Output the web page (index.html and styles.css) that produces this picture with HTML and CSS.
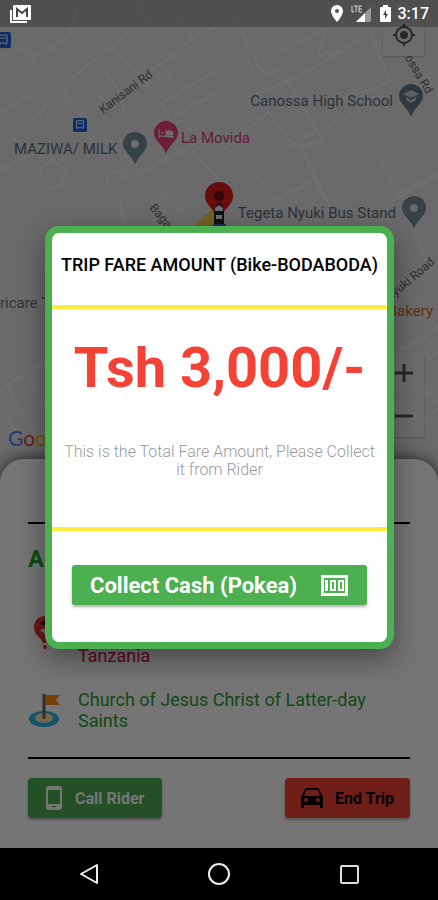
FILE: index.html
```html
<!DOCTYPE html>
<html lang="en">
<head>
  <meta charset="UTF-8" />
  <meta name="viewport" content="width=device-width, initial-scale=1" />
  <title>Trip Fare</title>
  <link rel="stylesheet" href="styles.css">
</head>
<body>

  <div class="app">
    <header class="status-bar">
      <svg class="mail-icon" width="22" height="18" viewBox="0 0 22 18">
        <path d="M1 5v12h16" fill="none" stroke="#fff" stroke-width="2"/>
        <path d="M4 0h16a1 1 0 0 1 1 1v13a1 1 0 0 1-1 1H4a1 1 0 0 1-1-1V1a1 1 0 0 1 1-1z" fill="#fff"/>
        <path d="M7 12V4l5 4 5-4v8" fill="none" stroke="#444" stroke-width="2"/>
      </svg>
      <div class="status-right">
        <svg width="12" height="17" viewBox="0 0 12 17">
          <path d="M6 0a6 6 0 0 0-6 6c0 4.500 6 11 6 11s6-6.500 6-11a6 6 0 0 0-6-6z" fill="#fff"/>
          <circle cx="6" cy="6" r="2" fill="#555"/>
        </svg>
        <svg class="signal-icon" width="22" height="18" viewBox="0 0 22 18">
          <path d="M21 2v15H6z" fill="#999"/>
          <path d="M15 8v9H6z" fill="#fff"/>
          <path d="M2 1v6h2M4 1h4M6 1v6M12 1H9v6h3M9 4h3" fill="none" stroke="#ddd" stroke-width="1"/>
        </svg>
        <svg class="battery-icon" width="11" height="17" viewBox="0 0 11 17">
          <path d="M3 0h5v2h2a1 1 0 0 1 1 1v13a1 1 0 0 1-1 1H1a1 1 0 0 1-1-1V3a1 1 0 0 1 1-1h2z" fill="#fff"/>
          <path d="M6 5L3 10h2v4l3-5H6z" fill="#444"/>
        </svg>
        <span class="clock">3:17</span>
      </div>
    </header>

    <main class="screen">
      <section class="map">
        <svg class="roads" viewBox="0 0 438 500" preserveAspectRatio="xMidYMin slice">
          <g class="minor">
            <path d="M77 8L69 34Q54 50 36 54L20 50"/>
            <path d="M127 34L66 83Q61 89 67 94L84 116M114 49L142 77L170 118M102 68L118 90L125 116"/>
            <path d="M0 112L36 92M48 102L38 116"/>
            <path d="M136 0L170 56L192 38L219 24M172 56L140 78M180 13L192 38M163 65L175 85"/>
            <path d="M219 69L164 102M219 91L173 116"/>
            <path d="M231 10L260 70L288 82L360 40M240 50L254 70M276 52L326 30L318 56L340 50"/>
            <path d="M262 62L270 73L277 70M242 98L288 82L324 142L292 146M369 30L390 82L340 100"/>
            <path d="M268 112L292 144L360 110M300 146L330 206M219 154L268 112M242 150L274 200L312 181M300 144L326 202"/>
            <path d="M378 154L398 194L438 174M420 152L438 144M390 202L438 176M416 58L438 92"/>
            <path d="M140 172L219 132M192 150L219 180M160 196L175 187M0 170L36 152M36 110L42 118"/>
            <path d="M52 160Q34 170 43 182Q52 192 61 184L66 170L50 158"/>
            <path d="M124 222L120 198L108 184Q102 170 116 172L128 178"/>
            <path d="M0 390L28 372L44 362M8 388L34 434M0 410L16 430M28 374L42 404"/>
            <path d="M411 220L426 262L438 270M380 300L404 284L438 330M394 352L426 338L438 350M428 360L438 352M426 420L438 408M424 390L438 402"/>
          </g>
          <path class="major-edge" d="M4 48L24 58L80 120L150 190L202 238"/>
          <path class="major" d="M4 48L24 58L80 120L150 190L202 238"/>
          <path class="major-line" d="M4 48L24 58L80 120L150 190L202 238"/>
          <g class="road-names">
            <text x="103" y="114" transform="rotate(-37 103 114)">Kanisani Rd</text>
            <text x="149" y="208" transform="rotate(50 149 208)">Bagamoyo</text>
            <text x="401" y="52" transform="rotate(59 401 52)">nossa Rd</text>
            <text x="389" y="302" transform="rotate(-40 389 302)">Nyuki Road</text>
          </g>
        </svg>

        <div class="transit transit-edge"><svg width="16" height="16" viewBox="0 0 16 16"><rect width="16" height="16" rx="2" fill="#1d62dc"/><path d="M4 3h8v8H4zM5 6h6M5 11v2M11 11v2" fill="none" stroke="#fff" stroke-width="1"/></svg></div>
        <div class="transit transit-mid"><svg width="14" height="14" viewBox="0 0 16 16"><rect width="16" height="16" rx="2" fill="#1d62dc"/><path d="M4 3h8v8H4zM5 6h6M5 11v2M11 11v2" fill="none" stroke="#fff" stroke-width="1"/></svg></div>

        <div class="place place-school">
          <span>Canossa High School</span>
          <svg width="24" height="33" viewBox="0 0 24 33"><path d="M12 0A12 12 0 0 0 0 12c0 8 9 11 12 21 3-10 12-13 12-21A12 12 0 0 0 12 0z" fill="#607d8b"/><path d="M4 10l8-4 8 4-8 4zM7 13v3l5 3 5-3v-3l-5 3z" fill="#ccc"/></svg>
        </div>
        <div class="place place-milk">
          <span>MAZIWA/ MILK</span>
          <svg width="24" height="33" viewBox="0 0 24 33"><path d="M12 0A12 12 0 0 0 0 12c0 8 9 11 12 21 3-10 12-13 12-21A12 12 0 0 0 12 0z" fill="#78909c"/><circle cx="12" cy="12" r="4" fill="#eee"/></svg>
        </div>
        <div class="place place-hotel">
          <svg width="24" height="33" viewBox="0 0 24 33"><path d="M12 0A12 12 0 0 0 0 12c0 8 9 11 12 21 3-10 12-13 12-21A12 12 0 0 0 12 0z" fill="#ec407a"/><path d="M5 8v9M5 15h14v2M7 12h3M12 10h5q2 0 2 2v2h-7z" fill="#eee" stroke="#eee" stroke-width="1"/></svg>
          <span>La Movida</span>
        </div>
        <div class="place place-bus">
          <span>Tegeta Nyuki Bus Stand</span>
          <svg width="24" height="33" viewBox="0 0 24 33"><path d="M12 0A12 12 0 0 0 0 12c0 8 9 11 12 21 3-10 12-13 12-21A12 12 0 0 0 12 0z" fill="#78909c"/><circle cx="12" cy="12" r="4" fill="#dde"/></svg>
        </div>
        <div class="place place-care"><span>ricare T</span></div>
        <div class="place place-bakery"><span>Bakery</span></div>

        <svg class="driver" width="48" height="60" viewBox="0 0 48 60">
          <path d="M0 52L26 27L32 32V60H0z" fill="#f6d64a"/>
          <path d="M33 0A14 14 0 0 0 19 14c0 10 11 13 14 26 3-13 14-16 14-26A14 14 0 0 0 33 0z" fill="#e31b1b"/>
          <circle cx="33" cy="14" r="5" fill="#701010"/>
          <path d="M28 27l5-7 5 7v17H28z" fill="#222"/>
          <path d="M29 26l4-3 4 3v3h-8zM30 33h6v4h-6z" fill="#eee"/>
          <path d="M27 42h13v4H27z" fill="#4263eb"/>
        </svg>

        <button class="map-button locate" type="button" aria-label="My location">
          <svg width="24" height="24" viewBox="0 0 24 24"><circle cx="12" cy="12" r="8" fill="none" stroke="#555" stroke-width="2"/><circle cx="12" cy="12" r="4" fill="#555"/><path d="M12 1v3M12 20v3M1 12h3M20 12h3" stroke="#555" stroke-width="2"/></svg>
        </button>
        <div class="zoom-controls">
          <button class="map-button" type="button" aria-label="Zoom in">
            <svg width="20" height="20" viewBox="0 0 20 20"><path d="M1 10h18M10 1v18" stroke="#555" stroke-width="3"/></svg>
          </button>
          <button class="map-button" type="button" aria-label="Zoom out">
            <svg width="20" height="20" viewBox="0 0 20 20"><path d="M1 10h18" stroke="#555" stroke-width="3"/></svg>
          </button>
        </div>
        <div class="google"><span class="g-blue">G</span><span class="g-red">o</span><span class="g-yellow">o</span></div>
      </section>

      <section class="sheet">
        <hr>
        <h2 class="trip-status">A</h2>
        <div class="stop pickup">
          <svg class="stop-icon" width="32" height="34" viewBox="0 0 32 34"><path d="M17 0A11 11 0 0 0 6 12c0 7 7 9 9 15h3c2-6 10-8 10-15A11 11 0 0 0 17 0z" fill="#e53935"/><path d="M17 4a8 8 0 0 0-5 4l5 1z" fill="#222"/><path d="M12 14q5-3 8 0l-2 5z" fill="#eee"/><circle cx="17" cy="31" r="2" fill="#e53935"/></svg>
          <p>Tanzania</p>
        </div>
        <div class="stop dropoff">
          <svg class="stop-icon" width="32" height="34" viewBox="0 0 32 34"><ellipse cx="16" cy="26" rx="15" ry="8" fill="#29b6e8"/><ellipse cx="16" cy="25" rx="9" ry="5" fill="#ffe0a0"/><path d="M9 25a7 4 0 0 0 14 0" fill="none" stroke="#b5e4f4" stroke-width="1"/><path d="M16 1v25" stroke="#666" stroke-width="3"/><path d="M17 2h15l-4 5 4 5H17z" fill="#ff8a14"/></svg>
          <p>Church of Jesus Christ of Latter-day Saints</p>
        </div>
        <hr>
        <div class="actions">
          <button class="btn call-btn" type="button">
            <svg width="16" height="24" viewBox="0 0 16 24"><path fill-rule="evenodd" d="M3 0h10a3 3 0 0 1 3 3v18a3 3 0 0 1-3 3H3a3 3 0 0 1-3-3V3a3 3 0 0 1 3-3zM2 4v14h12V4zM6 20v1h4v-1z" fill="#fff"/></svg>
            Call Rider
          </button>
          <button class="btn end-btn" type="button">
            <svg width="22" height="20" viewBox="0 0 22 20"><path fill-rule="evenodd" d="M4 1Q4 0 6 0h10q2 0 2 1l4 8v10q0 1-1 1h-1q-1 0-1-1v-2H3v2q0 1-1 1H1q-1 0-1-1V9zM5 2L3 8h16l-2-6zM5 10a2 2 0 1 0 0 4 2 2 0 0 0 0-4zM17 10a2 2 0 1 0 0 4 2 2 0 0 0 0-4z" fill="#000"/></svg>
            End Trip
          </button>
        </div>
      </section>

      <div class="overlay">
        <div class="dialog" role="dialog" aria-labelledby="fare-title">
          <h1 class="dialog-title" id="fare-title">TRIP FARE AMOUNT (Bike-BODABODA)</h1>
          <div class="fare">
            <p class="fare-amount">Tsh 3,000/-</p>
            <p class="fare-note">This is the Total Fare Amount, Please Collect it from Rider</p>
          </div>
          <div class="dialog-footer">
            <button class="collect-btn" type="button">
              Collect Cash (Pokea)
              <svg width="27" height="21" viewBox="0 0 27 21"><path fill-rule="evenodd" d="M0 0h27v21H0zM3 3v15h21V3z" fill="#fff"/><path d="M4 5h3v11H4z" fill="#fff"/><path fill-rule="evenodd" d="M9 5h6v11H9zM11 7v7h2V7zM17 5h6v11h-6zM19 7v7h2V7z" fill="#fff"/></svg>
            </button>
          </div>
        </div>
      </div>
    </main>

    <nav class="nav-bar">
      <button type="button" aria-label="Back"><svg width="22" height="24" viewBox="0 0 22 24"><path d="M19 3v18L3 12z" fill="none" stroke="#eee" stroke-width="2" stroke-linejoin="round"/></svg></button>
      <button type="button" aria-label="Home"><svg width="24" height="24" viewBox="0 0 24 24"><circle cx="12" cy="12" r="10" fill="none" stroke="#eee" stroke-width="2"/></svg></button>
      <button type="button" aria-label="Recent apps"><svg width="22" height="24" viewBox="0 0 22 24"><rect x="3" y="4" width="17" height="17" rx="1" fill="none" stroke="#ddd" stroke-width="2"/></svg></button>
    </nav>
  </div>

</body>
</html>
```
FILE: styles.css
```css
* {
  box-sizing: border-box;
}

body {
  margin: 0;
  font-family: Roboto, "Liberation Sans", sans-serif;
  background: #000;
}

h1, h2, p {
  margin: 0;
}

button {
  font-family: inherit;
  border: none;
  cursor: pointer;
}

svg {
  display: block;
  flex-shrink: 0;
}

.app {
  position: relative;
  display: flex;
  flex-direction: column;
  min-height: 100vh;
  overflow: hidden;
}

/* Status bar lies over the map */
.status-bar {
  position: absolute;
  inset: 0 0 auto;
  z-index: 3;
  display: flex;
  justify-content: space-between;
  align-items: center;
  height: 27px;
  padding: 0 9px 0 10px;
  background: rgba(0, 0, 0, 0.25);
}

.status-right {
  display: flex;
  align-items: center;
}

.signal-icon {
  margin-left: 7px;
}

.battery-icon {
  margin-left: 8px;
}

.clock {
  margin-left: 7px;
  color: #fff;
  font-size: 16px;
  font-weight: 500;
}

.screen {
  position: relative;
  flex: 1;
  display: flex;
  flex-direction: column;
}

/* Map */
.map {
  position: relative;
  flex: 1;
  min-height: 483px;
  background: #e6e6e6;
}

.roads {
  position: absolute;
  inset: 0;
  width: 100%;
  height: 100%;
}

.roads path {
  fill: none;
}

.minor {
  stroke: #f2f2f2;
  stroke-width: 2;
}

.major-edge {
  stroke: #f0f0f0;
  stroke-width: 14;
}

.major {
  stroke: #eaeaea;
  stroke-width: 11;
}

.major-line {
  stroke: #dedede;
  stroke-width: 1;
}

.road-names {
  fill: #666;
  font-size: 12px;
}

.place {
  position: absolute;
  display: flex;
  align-items: center;
  gap: 6px;
  color: #607080;
  font-size: 15px;
  white-space: nowrap;
}

.place-school {
  top: 84px;
  right: 15px;
}

.place-milk {
  top: 132px;
  left: 14px;
}

.place-hotel {
  top: 121px;
  left: 154px;
  gap: 3px;
  color: #e0407a;
}

.place-bus {
  top: 196px;
  right: 12px;
}

.place-care {
  top: 294px;
  left: 0;
  color: #777;
}

.place-bakery {
  top: 302px;
  right: 5px;
  color: #d9652b;
}

.transit {
  position: absolute;
}

.transit-edge {
  top: 32px;
  left: -5px;
}

.transit-mid {
  top: 118px;
  left: 73px;
}

.driver {
  position: absolute;
  top: 182px;
  left: 186px;
}

.map-button {
  display: flex;
  align-items: center;
  justify-content: center;
  width: 41px;
  height: 42px;
  padding: 0;
  background: #ececec;
}

.locate {
  position: absolute;
  top: 14px;
  right: 14px;
  box-shadow: 0 1px 2px rgba(0, 0, 0, 0.2);
}

.zoom-controls {
  position: absolute;
  top: 352px;
  right: 14px;
  display: flex;
  flex-direction: column;
  gap: 1px;
  background: #ddd;
  box-shadow: 0 1px 2px rgba(0, 0, 0, 0.2);
}

.google {
  position: absolute;
  top: 425px;
  left: 8px;
  font-family: Lato, sans-serif;
  font-size: 21px;
}

.g-blue {
  color: #4285f4;
}

.g-red {
  color: #ea4335;
}

.g-yellow {
  color: #fbbc05;
}

/* Trip sheet */
.sheet {
  position: relative;
  margin-top: -24px;
  padding: 63px 28px 30px;
  background: #fff;
  border-radius: 24px 24px 0 0;
  box-shadow: 0 0 16px rgba(0, 0, 0, 0.7);
}

.sheet hr {
  height: 2px;
  margin: 0;
  border: none;
  background: #000;
}

.trip-status {
  margin-top: 20px;
  color: #1fa32b;
  font-size: 24px;
  line-height: 30px;
}

.stop {
  display: flex;
  align-items: center;
  gap: 18px;
  font-size: 18px;
  line-height: 21px;
}

.pickup {
  align-items: flex-end;
  height: 50px;
  margin-top: 42px;
  color: #dc143c;
}

.pickup .stop-icon {
  margin-bottom: 16px;
}

.dropoff {
  margin: 23px 0 26px;
  color: #2e9e35;
}

.actions {
  display: flex;
  justify-content: space-between;
  margin-top: 19px;
}

.btn {
  display: flex;
  align-items: center;
  height: 40px;
  padding: 0 18px;
  border-radius: 4px;
  box-shadow: 0 2px 3px rgba(0, 0, 0, 0.3);
  font-size: 16px;
  font-weight: bold;
}

.call-btn {
  gap: 13px;
  background: #4caf50;
  color: #fff;
}

.end-btn {
  gap: 12px;
  padding: 0 16px;
  background: #f44336;
  color: #000;
}

/* Fare dialog */
.overlay {
  position: absolute;
  inset: 0;
  z-index: 2;
  display: flex;
  align-items: center;
  justify-content: center;
  padding: 27px 44px 0 45px;
  background: rgba(0, 0, 0, 0.54);
}

.dialog {
  width: 100%;
  max-width: 480px;
  border: 7px solid #4caf50;
  border-radius: 14px;
  background: #fff;
  box-shadow: 0 10px 28px rgba(0, 0, 0, 0.4);
  text-align: center;
}

.dialog-title {
  padding: 21px 0 29px;
  font-size: 18px;
  font-weight: 500;
  line-height: 22px;
}

.fare {
  padding: 24px 8px 48px;
  border-top: 4px solid #ffeb3b;
  border-bottom: 4px solid #ffeb3b;
}

.fare-amount {
  margin-bottom: 40px;
  color: #f44336;
  font-size: 56px;
  font-weight: bold;
  line-height: 70px;
}

.fare-note {
  color: #999;
  font-size: 16px;
  font-weight: 300;
  line-height: 18px;
}

.dialog-footer {
  padding: 34px 20px 37px;
}

.collect-btn {
  display: flex;
  align-items: center;
  justify-content: space-between;
  width: 100%;
  height: 40px;
  padding: 0 19px 0 18px;
  border-radius: 3px;
  background: #4caf50;
  box-shadow: 0 2px 3px rgba(0, 0, 0, 0.3);
  color: #fff;
  font-size: 22px;
  font-weight: bold;
}

.nav-bar {
  display: flex;
  align-items: center;
  justify-content: space-between;
  height: 52px;
  padding: 0 78px;
  background: #000;
}

.nav-bar button {
  padding: 0;
  background: none;
}
```
